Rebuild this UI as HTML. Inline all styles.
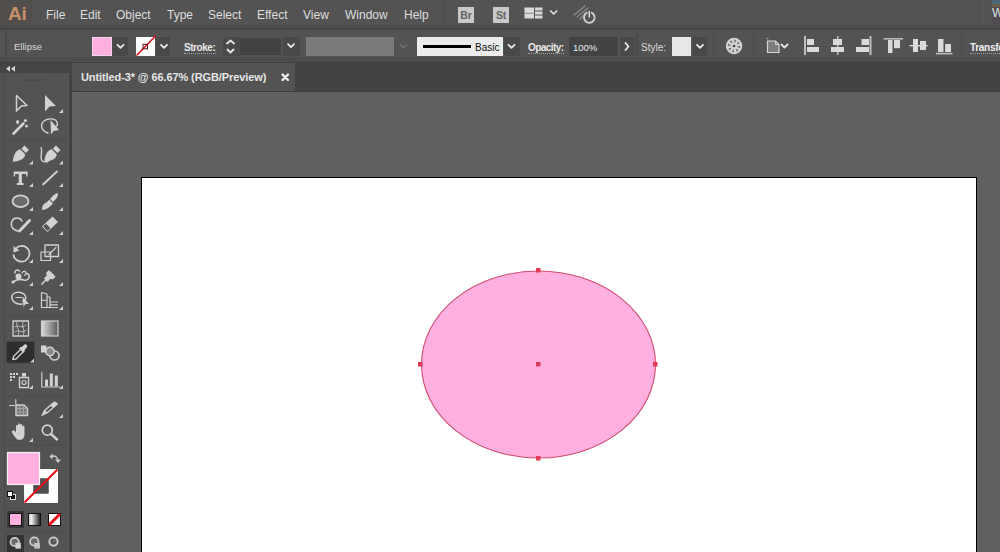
<!DOCTYPE html>
<html><head><meta charset="utf-8">
<style>
*{margin:0;padding:0;box-sizing:border-box}
html,body{width:1000px;height:552px;overflow:hidden;background:#606060;font-family:"Liberation Sans",sans-serif;position:relative}
.a{position:absolute}
.menu{left:0;top:0;width:1000px;height:25px;background:#535353}
.mi{position:absolute;top:8px;font-size:12px;color:#dedede;line-height:14px;white-space:nowrap}
.ctrl{left:0;top:30px;width:1000px;height:27px;background:#535353}
.lbl{position:absolute;font-size:10px;color:#dcdcdc;line-height:12px;white-space:nowrap}
.dd{position:absolute;top:37px;height:19px;background:#494949}
.chev{position:absolute;width:6px;height:6px;border-right:1.6px solid #dcdcdc;border-bottom:1.6px solid #dcdcdc;transform:rotate(45deg)}
.sep{position:absolute;width:1px;background:#4b4b4b}
.tool{position:absolute}
.tri{position:absolute;width:0;height:0;border-left:4px solid transparent;border-bottom:4px solid #cfcfcf}
</style></head><body>
<!-- menu bar -->
<div class="a menu"></div>
<div class="a" style="left:0;top:25px;width:1000px;height:3px;background:#4c4c4c"></div>
<div class="a" style="left:0;top:28px;width:1000px;height:2px;background:#444"></div>
<div class="a" style="left:0;top:0;width:32px;height:25px;background:#514e4c"></div><div class="a" style="left:8px;top:3px;font-size:19px;font-weight:bold;line-height:22px;color:#c69068;letter-spacing:-0.3px">Ai</div>
<div class="mi" style="left:46px">File</div>
<div class="mi" style="left:80px">Edit</div>
<div class="mi" style="left:116px">Object</div>
<div class="mi" style="left:167px">Type</div>
<div class="mi" style="left:208px">Select</div>
<div class="mi" style="left:257px">Effect</div>
<div class="mi" style="left:303px">View</div>
<div class="mi" style="left:345px">Window</div>
<div class="mi" style="left:404px">Help</div>


<!-- menu icons -->
<div class="a" style="left:443px;top:3px;width:1px;height:22px;background:#4a4a4a"></div>
<div class="a" style="left:458px;top:7px;width:16px;height:16px;background:#c9c9c9;color:#636363;font-size:10.5px;font-weight:bold;line-height:17px;text-align:center;letter-spacing:-0.2px">Br</div>
<div class="a" style="left:493px;top:7px;width:16px;height:16px;background:#c9c9c9;color:#636363;font-size:10.5px;font-weight:bold;line-height:17px;text-align:center;letter-spacing:-0.2px">St</div>
<div class="a" style="left:983px;top:0;width:1px;height:24px;background:#5a5a5a"></div><div class="a" style="left:977px;top:4px;width:1px;height:20px;background:#4e4e4e"></div>
<div class="a" style="left:992px;top:0;width:8px;height:24px;background:#4f4b4e;overflow:hidden">
<div class="a" style="left:0;top:0;width:8px;height:4px;background:#4d6676"></div>
<div class="a" style="left:0;top:4px;width:8px;height:3px;background:#6b5c4c"></div>
<div class="a" style="left:0;top:6px;font-size:12px;line-height:14px;color:#dfe6ea">W</div>
</div>
<svg class="a" style="left:0;top:0" width="1000" height="28">
<g fill="#d9d9d9">
<rect x="524.5" y="7.5" width="9.5" height="11"/>
<rect x="535" y="7.5" width="7.5" height="3"/>
<rect x="535" y="11.5" width="7.5" height="3"/>
<rect x="535" y="15.5" width="7.5" height="3"/>
</g>
<rect x="524.5" y="12.8" width="9.5" height="0.8" fill="#777"/>
<polyline points="550.7,11.0 553.7,14.0 556.7,11.0" fill="none" stroke="#e0e0e0" stroke-width="1.7" stroke-linecap="round" stroke-linejoin="round"/>
<g stroke="#8a8a8a" stroke-width="1.6" stroke-linecap="round" opacity="0.9">
<line x1="574" y1="15" x2="585" y2="6"/>
<line x1="577" y1="17" x2="588" y2="8"/>
<line x1="580" y1="19" x2="586" y2="13"/>
</g>
<circle cx="589.3" cy="17.5" r="5.3" fill="none" stroke="#d0d0d0" stroke-width="1.8"/>
<rect x="587.5" y="10" width="3.6" height="4" fill="#535353"/>
<line x1="589.3" y1="11" x2="589.3" y2="17.5" stroke="#d8d8d8" stroke-width="1.6"/>
</svg>

<!-- control bar -->
<div class="a ctrl"></div>
<div class="a" style="left:0;top:57px;width:1000px;height:5px;background:#4c4c4c"></div>
<div class="a" style="left:0;top:62px;width:1000px;height:1px;background:#3e3e3e"></div>


<!-- control bar content -->
<div class="a" style="left:5px;top:31px;width:2px;height:26px;background:#484848"></div>
<div class="lbl" style="left:14px;top:41px;font-size:9.5px;color:#d8d8d8">Ellipse</div><div class="a" style="left:8px;top:38px;width:40px;height:18px;border:1px solid #505050;border-radius:3px"></div>
<div class="a" style="left:92px;top:37px;width:20px;height:19px;background:#ffb0e0;border:1px solid #f4d4ea"></div>
<div class="dd" style="left:112px;width:16px"></div>
<div class="a" style="left:136px;top:37px;width:19px;height:19px;background:#fff"></div>
<div class="dd" style="left:156px;width:14px"></div>
<div class="lbl" style="left:184px;top:42px;font-weight:bold;color:#e8e8e8;letter-spacing:-0.45px">Stroke:</div>
<div class="a" style="left:184px;top:53px;width:32px;height:0;border-top:1px dotted #a0a0a0"></div>
<div class="dd" style="left:223px;width:17px"></div>
<div class="a" style="left:240px;top:38px;width:41px;height:17px;background:#434343"></div>
<div class="dd" style="left:283px;width:17px"></div>
<div class="a" style="left:306px;top:37px;width:88px;height:19px;background:#7a7a7a"></div>
<div class="a" style="left:417px;top:37px;width:86px;height:19px;background:#ececec"></div>
<div class="a" style="left:423px;top:45px;width:48px;height:3px;background:#000"></div>
<div class="lbl" style="left:475px;top:42px;color:#111">Basic</div>
<div class="dd" style="left:504px;width:16px"></div>
<div class="lbl" style="left:528px;top:42px;font-weight:bold;color:#e8e8e8;letter-spacing:-0.55px">Opacity:</div>
<div class="a" style="left:528px;top:53px;width:36px;height:0;border-top:1px dotted #a0a0a0"></div>
<div class="a" style="left:569px;top:37px;width:49px;height:19px;background:#434343"></div>
<div class="lbl" style="left:573px;top:42px;color:#ececec;font-size:9.5px">100%</div>
<div class="dd" style="left:620px;width:14px"></div>
<div class="a" style="left:635px;top:33px;width:4px;height:23px;background:#4a4a4a"></div>
<div class="lbl" style="left:641px;top:42px;color:#d8d8d8">Style:</div>
<div class="a" style="left:672px;top:37px;width:19px;height:19px;background:#e8e8e8"></div>
<div class="dd" style="left:693px;width:14px"></div>
<div class="sep" style="left:713px;top:33px;height:23px"></div>
<div class="sep" style="left:753px;top:33px;height:23px"></div>
<div class="sep" style="left:961px;top:33px;height:23px"></div>
<div class="lbl" style="left:970px;top:42px;font-weight:bold;color:#f0f0f0;letter-spacing:-0.3px">Transform</div>
<div class="a" style="left:970px;top:53px;width:30px;height:0;border-top:1px dotted #a0a0a0"></div>
<svg class="a" style="left:0;top:0" width="1000" height="62">
<g fill="none" stroke="#e4e4e4" stroke-width="1.9" stroke-linecap="round" stroke-linejoin="round">
<polyline points="117.5,44.8 120.5,47.8 123.5,44.8"/>
<polyline points="161.0,44.8 164.0,47.8 167.0,44.8"/>
<polyline points="227,43.5 230.5,40.5 234,43.5"/>
<polyline points="227.5,49.5 230.5,52.5 233.5,49.5"/>
<polyline points="288.0,44.2 291.0,47.2 294.0,44.2"/>
<polyline points="508.5,44.8 511.5,47.8 514.5,44.8" />
<polyline points="625.5,43 628.5,46.5 625.5,50"/>
<polyline points="697.0,44.8 700.0,47.8 703.0,44.8"/>
<polyline points="781.5,44.5 784.5,47.5 787.5,44.5"/>
<polyline points="400.5,44.8 403.5,47.8 406.5,44.8" stroke="#6a6a6a"/>
</g>
<line x1="136.5" y1="55.5" x2="156" y2="35.5" stroke="#d8101e" stroke-width="1.6"/>
<rect x="143" y="44.3" width="4.5" height="4.5" fill="none" stroke="#5a1010" stroke-width="1"/>

<g fill="#dadada">
<rect x="804" y="36" width="2" height="19" fill="#bdbdbd"/>
<rect x="807" y="39" width="7" height="6"/>
<rect x="807" y="47" width="12" height="5"/>
<rect x="837" y="36" width="1.5" height="19" fill="#bdbdbd"/>
<rect x="833" y="39" width="9" height="6"/>
<rect x="831" y="47" width="13" height="5"/>
<rect x="869.5" y="36" width="2" height="19" fill="#bdbdbd"/>
<rect x="861.5" y="39" width="7.5" height="6"/>
<rect x="856" y="47" width="13" height="5"/>
<rect x="883.5" y="38" width="19.5" height="1.6" fill="#bdbdbd"/>
<rect x="888" y="40" width="4.5" height="13"/>
<rect x="894" y="40" width="6" height="8.2"/>
<rect x="909.5" y="45" width="18" height="1.4" fill="#e0e0e0"/>
<rect x="913" y="39" width="5" height="13"/>
<rect x="920" y="41" width="6" height="9"/>
<rect x="936" y="52.8" width="16.5" height="1.6" fill="#bdbdbd"/>
<rect x="938" y="39" width="5.5" height="13"/>
<rect x="945.2" y="44" width="5.8" height="8"/>
</g>
<circle cx="734.1" cy="46" r="8.2" fill="#d6d6d6"/>
<path d="M736.66,46.45 L740.50,45.78 L740.03,48.40 Z" fill="#7a7a7a"/>
<path d="M735.59,48.13 L738.78,50.36 L736.60,51.89 Z" fill="#7a7a7a"/>
<path d="M733.65,48.56 L734.32,52.40 L731.70,51.93 Z" fill="#7a7a7a"/>
<path d="M731.97,47.49 L729.74,50.68 L728.21,48.50 Z" fill="#7a7a7a"/>
<path d="M731.54,45.55 L727.70,46.22 L728.17,43.60 Z" fill="#7a7a7a"/>
<path d="M732.61,43.87 L729.42,41.64 L731.60,40.11 Z" fill="#7a7a7a"/>
<path d="M734.55,43.44 L733.88,39.60 L736.50,40.07 Z" fill="#7a7a7a"/>
<path d="M736.23,44.51 L738.46,41.32 L739.99,43.50 Z" fill="#7a7a7a"/>
<circle cx="734.1" cy="46" r="1.3" fill="#3e3e3e"/>
<path d="M767.5,41 H775.5 L779,44.5 V52.5 H767.5 Z" fill="#7c7c7c" stroke="#d6d6d6" stroke-width="1.2"/>
<path d="M775.5,41 V44.5 H779" fill="none" stroke="#d6d6d6" stroke-width="1"/>
<circle cx="767.5" cy="38.5" r="1" fill="#9a9a9a"/>
</svg>


<!-- tab bar -->
<div class="a" style="left:72px;top:63px;width:928px;height:28px;background:#424242"></div>
<div class="a" style="left:72px;top:63px;width:223px;height:28px;background:#535353"></div>
<div class="a" style="left:81px;top:71px;font-size:11px;font-weight:bold;color:#e6e6e6;line-height:13px;white-space:nowrap;letter-spacing:-0.1px">Untitled-3* @ 66.67% (RGB/Preview)</div>
<svg class="a" style="left:278px;top:70px" width="14" height="14"><path d="M4.5,4.5 L10,10 M10,4.5 L4.5,10" stroke="#f2f2f2" stroke-width="2.3" stroke-linecap="round"/></svg>
<div class="a" style="left:72px;top:91px;width:928px;height:1px;background:#3c3c3c"></div>

<!-- left strip & toolbar -->
<div class="a" style="left:72px;top:92px;width:7px;height:460px;background:#636363"></div>
<div class="a" style="left:0;top:63px;width:72px;height:489px;background:#535353"></div>
<div class="a" style="left:0;top:63px;width:72px;height:10px;background:#444"></div>
<div class="a" style="left:69px;top:73px;width:3px;height:479px;background:#424242"></div>


<!-- toolbar content -->
<div class="a" style="left:4px;top:73px;width:65px;height:479px;border-left:1px solid #4a4a4a;border-right:1px solid #5a5a5a"></div>
<svg class="a" style="left:0;top:0" width="72" height="552">
<g fill="#cfcfcf" stroke="none">
<path d="M6,68.8 L10,65.8 L10,71.8 Z M11,68.8 L15,65.8 L15,71.8 Z" fill="#d4d4d4"/>
<rect x="24" y="79.5" width="20" height="1" fill="#464646"/>
<rect x="5" y="139.5" width="63" height="1" fill="#4d4d4d"/>
<rect x="5" y="315" width="63" height="1" fill="#4d4d4d"/>
<rect x="5" y="395.5" width="63" height="1" fill="#4d4d4d"/>
<rect x="5" y="444.5" width="63" height="1" fill="#4d4d4d"/>
<!-- small triangles -->
<path d="M63,109 V113 H59 Z"/>
<path d="M33,160.5 V164.5 H29 Z M63,160.5 V164.5 H59 Z"/>
<path d="M33,183 V187 H29 Z M63,183 V187 H59 Z"/>
<path d="M33,207 V211 H29 Z M63,207 V211 H59 Z"/>
<path d="M33,231 V235 H29 Z M63,231 V235 H59 Z"/>
<path d="M33,259 V263 H29 Z M63,259 V263 H59 Z"/>
<path d="M33,282 V286 H29 Z M63,282 V286 H59 Z"/>
<path d="M33,306 V310 H29 Z M63,306 V310 H59 Z"/>
<path d="M33,385 V389 H29 Z M63,385 V389 H59 Z"/>
<path d="M63,414 V418 H59 Z"/>
<path d="M33,438 V442 H29 Z"/>
</g>
<!-- selected eyedropper bg -->
<rect x="6.5" y="341.5" width="28" height="21.5" rx="1.5" fill="#2e2e2e" stroke="#444" stroke-width="1"/>
<path d="M34,358.5 V362.5 H30 Z" fill="#cfcfcf"/>
<g fill="none" stroke="#d2d2d2" stroke-width="1.5" stroke-linejoin="round" stroke-linecap="round">
<!-- direct selection hollow arrow -->
<path d="M16.5,95.5 L27,105.5 L21.3,106 L16.5,111 Z"/>
<!-- magic wand -->
<line x1="13.5" y1="133.5" x2="23.5" y2="123.5" stroke-width="2.6"/>
<!-- lasso -->
<path d="M48,133 C41,131 40,124 44,121 C48,118 55,118 57,122 C58,124 57,126 55,127" stroke-width="1.4"/>
<!-- curvature pen curve -->
<path d="M13.5,161 L19.5,155" stroke="#535353" stroke-width="1"/>
<path d="M45,161 L51,155" stroke="#535353" stroke-width="1"/>
<path d="M41,147.5 C43,151 40,156 41.5,160 C42.5,162 46,162 48,161.5" stroke-width="1.4"/>
<!-- line tool -->
<line x1="43" y1="184.5" x2="57" y2="171.5" stroke-width="1.8"/>
<!-- ellipse -->
<ellipse cx="20.5" cy="201.2" rx="8" ry="5.8" stroke-width="1.8" fill="#6b6b6b"/>
<!-- shaper/blob -->
<path d="M18,231 C12,230 10,225 12,221 C14,217 20,217 22,221" stroke-width="1.6"/>
<line x1="19.5" y1="231" x2="29.5" y2="220.5" stroke-width="3"/>
<!-- rotate -->
<path d="M16,248.5 C19,245 25,245 28,249 C31,253 29,259 25,261 C20,263 14,260 13.5,255" stroke-width="1.7"/>
<!-- scale -->
<rect x="41" y="252" width="9.5" height="8.5" stroke-width="1.2"/>
<rect x="45" y="245" width="13.5" height="11.5" stroke-width="1.3"/>
<line x1="49" y1="254.5" x2="56" y2="247.5" stroke-width="1.2"/>
<!-- puppet -->
<path d="M13,282 C17,279 21,279 24,280 C27.5,281 30,278 29,275 C28,273 26,273 25,275" stroke-width="1.6"/>
<path d="M15,273 C14.5,270.5 17,269 19.5,271" stroke-width="1.5"/>
<path d="M22,273 C23,271 25,271 26,272.5" stroke-width="1.3"/>
<!-- shape builder -->
<path d="M22,304 C15,305 11,300 12,296 C13,292 20,291 24,294 C27,297 26,300 23,301" stroke-width="1.5"/>
<path d="M16,297.5 H22" stroke-width="1.2"/>
<!-- perspective grid -->
<path d="M41.5,292.5 V307.5 H57.5 M41.5,292.5 L47,294 V307.5 M41.5,300 L47,300.5 M47,297 H50 V307.5 M50,302 H57.5 M50,304.8 H57.5" stroke-width="1.2"/>
<!-- mesh -->
<rect x="13" y="321" width="15.5" height="15" stroke-width="1.3"/>
<path d="M15,327 C18,323 21,330 26,325 M15,332 C19,328 22,335 26,330 M17,322 C15,327 21,330 18,336 M23,322 C21,327 26,330 23,336" stroke-width="1" stroke="#bdbdbd"/>
<!-- eyedropper -->
<path d="M12.8,359.5 L13.5,356.5 L21,349 L23.5,351.5 L16,359 Z" stroke-width="1.3"/>
<!-- blend -->
<circle cx="54.5" cy="355.5" r="4.5" stroke-width="1.6"/>
<circle cx="50" cy="351.5" r="4.2" stroke-width="1.4" fill="#8a8a8a"/>
<!-- symbol sprayer -->
<rect x="19.5" y="377.5" width="9" height="10" stroke-width="1.4"/>
<circle cx="24" cy="382.5" r="2" stroke-width="1.2"/>
<!-- graph -->
<path d="M41.8,372.5 V387 H59.5" stroke-width="1.2"/>

<!-- artboard tool -->
<path d="M16,405 H24 L27.5,408.5 V415.5 H16 Z" stroke-width="1.4" fill="#7a7a7a"/>
<path d="M9.5,405.5 H14.5 M15.8,399.5 V404" stroke-width="1.1"/><path d="M16.5,408.5 H27 M16.5,412 H27 M20,405.5 V415 M23.5,405.5 V415" stroke="#a8a8a8" stroke-width="0.8"/>
<!-- zoom -->
<circle cx="47.3" cy="430.2" r="5" stroke-width="1.7"/>
<line x1="51" y1="434" x2="57" y2="439.5" stroke-width="2.4"/>
<!-- rotate arrowhead -->
</g>
<g fill="#d2d2d2">
<!-- selection filled arrow -->
<path d="M45,95 L56,106 L49.5,106.5 L45,111.5 Z"/>
<!-- wand sparkles -->
<path d="M17.6,119.5 L19.5,122 L17.6,124.5 L15.7,122 Z"/>
<circle cx="25.4" cy="120.6" r="1.5"/>
<circle cx="26.5" cy="126.2" r="1.4"/>
<!-- lasso arrow -->
<path d="M50.5,120 L51,134.5 L53.5,131 L59,130 Z"/>
<!-- pen nib -->
<path d="M24.5,145.5 L29,150 L25.9,153.1 L21.4,148.6 Z"/>
<path d="M20.3,149.3 L25.2,154.2 C25,158.5 20,161.2 12.8,161.8 C13.3,154.5 16.5,149.8 20.3,149.3 Z"/>
<path d="M56,145.5 L60.5,150 L57.4,153.1 L52.9,148.6 Z"/>
<path d="M51.8,149.3 L56.7,154.2 C56.5,158.5 51.5,161.2 44.3,161.8 C44.8,154.5 48,149.8 51.8,149.3 Z"/>
<!-- type T -->
<path d="M13.7,171.5 H27.6 V176.5 H26.2 V174.1 H21.9 V182.9 H23.6 V185 H16.8 V182.9 H18.7 V174.1 H15.1 V176.5 H13.7 Z"/>
<!-- paintbrush -->
<path d="M57.8,193.5 C58.8,195 56.5,199 53,202 L50,199 C53,195.5 56.3,192.5 57.8,193.5 Z"/>
<path d="M49.3,199.8 L53,203.5 L50.5,206 C48,209 44.5,209.8 42,209.8 C42,207 43,203.5 46.5,202.5 Z"/>
<!-- eraser -->
<path d="M42,226.5 L52.5,216.5 L58,222 L47.5,232 Z"/><path d="M43.2,226.5 L46,223.8 L50.4,228.2 L47.6,230.9 Z" fill="#535353"/>
<!-- puppet warp -->
<circle cx="18.5" cy="276.5" r="3"/><circle cx="13" cy="282" r="1.6"/>
<!-- pin -->
<g transform="translate(41.5,284.5) rotate(-46)"><rect x="0" y="-0.8" width="7" height="1.6"/><path d="M6,-2.6 H10.5 L11.5,-4.8 H15.3 Q16.3,0 15.3,4.8 H11.5 L10.5,2.6 H6 Z"/></g>
<!-- shape builder arrow -->
<path d="M22.5,296.5 L23.5,307 L25.5,304 L29,304 Z"/>
<!-- perspective floor -->
<!-- gradient -->
<!-- blend square -->
<path d="M20.5,348 L24.5,344.5 C26,343.5 28,345.5 27,347 L23.8,351.2 Z"/><rect x="19" y="348.5" width="6" height="2.4" transform="rotate(45 22 349.7)"/>
<rect x="41" y="345.5" width="5.5" height="7"/>
<!-- symbol dots -->
<rect x="10" y="373" width="2" height="2"/><rect x="13" y="373" width="2" height="2"/><rect x="16" y="373" width="2" height="2"/>
<rect x="10" y="376" width="2" height="2"/><rect x="13" y="376" width="2" height="2"/>
<rect x="10" y="379" width="2" height="2"/>
<rect x="22" y="373" width="4" height="3.5"/>
<!-- graph bars -->
<rect x="45" y="379.5" width="3" height="6.8"/>
<rect x="49.8" y="373.5" width="3" height="12.8"/>
<rect x="54.8" y="375.5" width="3" height="10.8"/>
<!-- slice -->
<path d="M41,416.5 L44,410 L54,401.5 C56,401.5 58,403 57.7,404.5 L48,413 Z"/><path d="M45.5,410.5 L51,406 L52.5,407.5 L47,412 Z" fill="#535353"/>
<!-- hand -->
<path d="M15,437 C13,434 11,432 12.5,430.5 C13.5,430 15,431 16,432.5 V426 C16,424.5 18,424.5 18,426 V431 V424.5 C18,423 20.3,423 20.3,424.5 V431 V425.3 C20.3,424 22.5,424 22.5,425.3 V431.5 V427 C22.5,425.8 24.5,425.8 24.5,427 V434 C24.5,437.5 23,439.8 20,439.8 H17.5 Z"/>
<!-- rotate arrowhead -->
<path d="M13.5,246 L19.5,250.5 L13.5,252.5 Z"/>
</g>
<!-- gradient tool -->
<defs><linearGradient id="gt" x1="0" x2="1"><stop offset="0" stop-color="#dcdcdc"/><stop offset="1" stop-color="#5a5a5a"/></linearGradient></defs>
<rect x="41.5" y="321" width="16.5" height="15" fill="url(#gt)" stroke="#cfcfcf" stroke-width="1.2"/>
</svg>


<!-- color section -->
<svg class="a" style="left:0;top:440px" width="72" height="112">
<g transform="translate(0,-440)">
<!-- stroke swatch -->
<rect x="28.5" y="473.5" width="25" height="25" fill="none" stroke="#ffffff" stroke-width="10"/>
<rect x="33.5" y="478.5" width="15" height="15" fill="#4d4d4d"/>
<rect x="23.5" y="468.5" width="35" height="35" fill="none" stroke="#3a3a3a" stroke-width="0.8"/>
<line x1="24.5" y1="502.5" x2="57.5" y2="469.5" stroke="#e3101c" stroke-width="2.2"/>
<!-- fill swatch -->
<rect x="7.5" y="452.5" width="32" height="32" fill="#ffb0e0" stroke="#f6f0f4" stroke-width="1.2"/>
<!-- swap -->
<path d="M51,456.5 C55,455 58,457 58,461.5" fill="none" stroke="#cfcfcf" stroke-width="1.4"/>
<path d="M49.5,456.5 L52.5,453.5 V459.5 Z M58,463 L55,459.5 H61 Z" fill="#cfcfcf"/>
<!-- default -->
<rect x="10.5" y="494.5" width="5" height="5" fill="#111" stroke="#ddd" stroke-width="1"/>
<rect x="7.5" y="491.5" width="5" height="5" fill="#fff" stroke="#111" stroke-width="1"/>
<rect x="4" y="507" width="64" height="1" fill="#4e4e4e"/>
<!-- mode buttons -->
<rect x="7" y="511" width="17" height="17" fill="#383838"/>
<rect x="9.5" y="513.5" width="12" height="12" fill="#ffb0e0" stroke="#111" stroke-width="1"/>
<defs><linearGradient id="g2" x1="0" x2="1"><stop offset="0" stop-color="#c8c8c8"/><stop offset="0.25" stop-color="#eeeeee"/><stop offset="1" stop-color="#1a1a1a"/></linearGradient></defs>
<rect x="28.5" y="513.5" width="12" height="12" fill="url(#g2)" stroke="#111" stroke-width="1"/>
<rect x="48.5" y="513.5" width="12" height="12" fill="#fff" stroke="#111" stroke-width="1"/>
<line x1="49" y1="525" x2="60" y2="514" stroke="#e3101c" stroke-width="3"/>
<rect x="4" y="531.5" width="60" height="1" fill="#4c4c4c"/>
<rect x="7" y="535" width="17" height="17" fill="#333"/>
<g fill="#6a6a6a" stroke="#cdcdcd" stroke-width="1.8">
<circle cx="14.7" cy="542" r="4.2"/>
<circle cx="34.3" cy="541.5" r="4.2"/>
<circle cx="53.5" cy="541.6" r="4.2"/>
</g>
<rect x="15.4" y="542.7" width="5.4" height="6" fill="#d0d0d0"/>
<rect x="34.3" y="543" width="5.6" height="5.6" fill="#c4c4c4"/>
<path d="M53.5,539.5 A2,2 0 1 0 55.5,541.5" fill="none" stroke="#444" stroke-width="1"/>
</g>
</svg>

<!-- artboard -->
<div class="a" style="left:141px;top:177px;width:836px;height:400px;background:#fff;border:1px solid #000"></div>

<!-- ellipse -->
<svg class="a" style="left:0;top:0" width="1000" height="552">
<ellipse cx="538.5" cy="364.5" rx="117" ry="93.5" fill="#ffafe0" stroke="#d24a6c" stroke-width="1.1"/>
<rect x="536" y="268" width="4.5" height="4.5" fill="#e23a52"/>
<rect x="536" y="456" width="4.5" height="4.5" fill="#e23a52"/>
<rect x="418" y="362" width="4.5" height="4.5" fill="#e23a52"/>
<rect x="653" y="362" width="4.5" height="4.5" fill="#e23a52"/>
<rect x="536" y="362" width="4.5" height="4.5" fill="#d8405c"/>
</svg>
</body></html>
